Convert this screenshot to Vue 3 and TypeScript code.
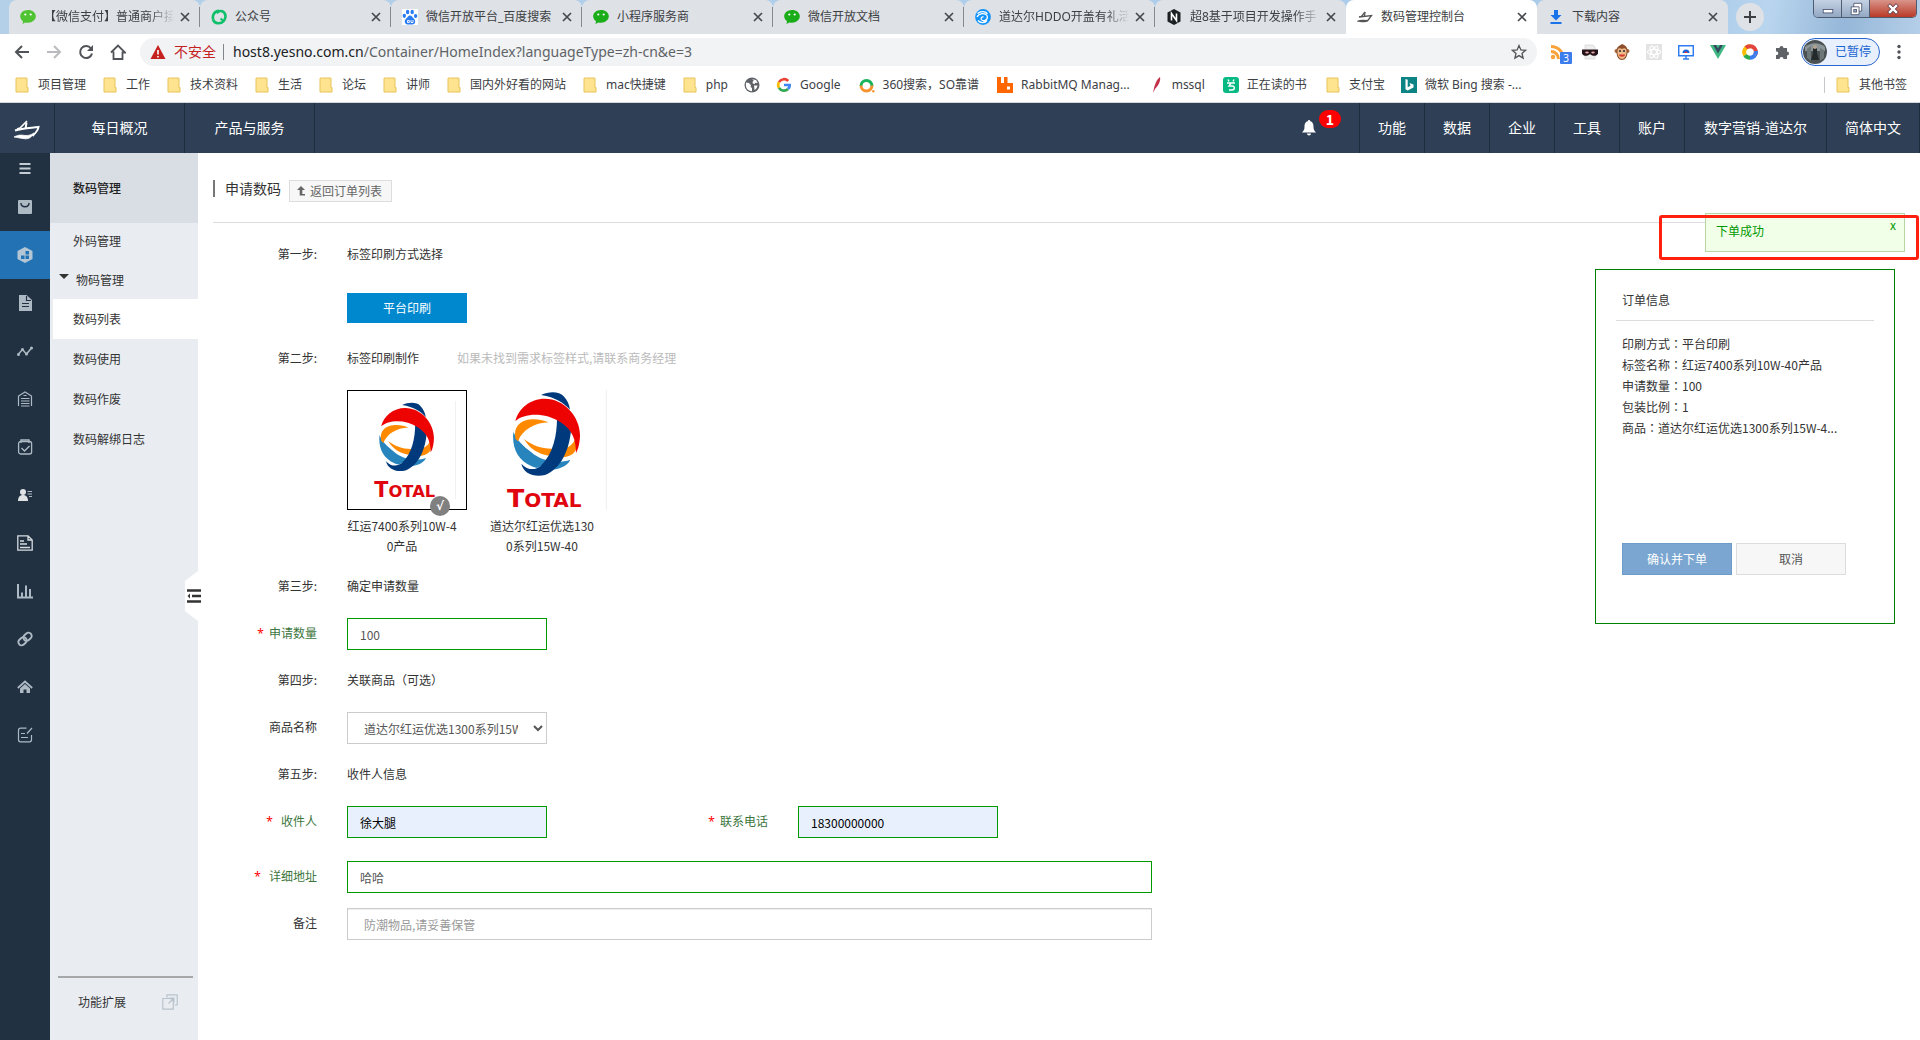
<script setup lang="ts">
import { ref } from 'vue'

interface Tab { title: string; icon: string; active?: boolean; fade?: boolean }
const tabs: Tab[] = [
  { title: '【微信支付】普通商户接', icon: 'wechat-light', fade: true },
  { title: '公众号', icon: 'mp' },
  { title: '微信开放平台_百度搜索', icon: 'baidu' },
  { title: '小程序服务商', icon: 'wechat' },
  { title: '微信开放文档', icon: 'wechat' },
  { title: '道达尔HDDO开盖有礼活', icon: 'swirl', fade: true },
  { title: '超8基于项目开发操作手', icon: 'hex', fade: true },
  { title: '数码管理控制台', icon: 'ship', active: true },
  { title: '下载内容', icon: 'download' },
]

interface Bookmark { label: string; icon: string }
const bookmarks: Bookmark[] = [
  { label: '项目管理', icon: 'folder' },
  { label: '工作', icon: 'folder' },
  { label: '技术资料', icon: 'folder' },
  { label: '生活', icon: 'folder' },
  { label: '论坛', icon: 'folder' },
  { label: '讲师', icon: 'folder' },
  { label: '国内外好看的网站', icon: 'folder' },
  { label: 'mac快捷键', icon: 'folder' },
  { label: 'php', icon: 'folder' },
  { label: '', icon: 'globe' },
  { label: 'Google', icon: 'google' },
  { label: '360搜索，SO靠谱', icon: 'so' },
  { label: 'RabbitMQ Manag...', icon: 'rabbit' },
  { label: 'mssql', icon: 'feather' },
  { label: '正在读的书', icon: 'reader' },
  { label: '支付宝', icon: 'folder' },
  { label: '微软 Bing 搜索 -...', icon: 'bing' },
]

const topMenu = ['功能', '数据', '企业', '工具', '账户', '数字营销-道达尔', '简体中文']
const rail = ['bag', 'cube', 'doc', 'trend', 'store', 'clip', 'user', 'page', 'bars', 'link', 'home', 'edit']
const subItems = ['数码列表', '数码使用', '数码作废', '数码解绑日志']
const labels = ['红运7400系列10W-40产品', '道达尔红运优选1300系列15W-40']
const summary = [
  ['印刷方式', '平台印刷'],
  ['标签名称', '红运7400系列10W-40产品'],
  ['申请数量', '100'],
  ['包装比例', '1'],
  ['商品', '道达尔红运优选1300系列15W-4...'],
]

const selected = ref(0)
const quantity = ref('100')
const product = ref('道达尔红运优选1300系列15W-40')
const receiver = ref('徐大腿')
const phone = ref('18300000000')
const address = ref('哈哈')
const remark = ref('')
</script>

<template>
  <div class="window">
    <header class="browser">
      <div class="tabstrip">
        <div v-for="t in tabs" :key="t.title" class="tab" :class="{ active: t.active, fade: t.fade }">
          <svg class="i16" viewBox="0 0 16 16">
            <g v-if="t.icon.startsWith('wechat')">
              <path :fill="t.icon === 'wechat' ? '#1aad19' : '#4fc332'" d="M8 1C3.6 1 .2 3.8.2 7.3c0 2 1.1 3.800 2.800 5L2.500 15l2.800-1.600c.9.2 1.700.3 2.700.3 4.400 0 7.800-2.800 7.800-6.400S12.400 1 8 1z" />
              <circle cx="5.300" cy="5.500" r="1.100" fill="#fff" /><circle cx="10.700" cy="5.500" r="1.100" fill="#fff" />
            </g>
            <g v-else-if="t.icon === 'mp'" fill="none" stroke="#0fbf6a" stroke-width="2.600">
              <path d="M8 1.800C3.500 2 .8 6.500 2.300 10.500M5.500 4c4-4 8.500-1.500 9 3 .1 2-.6 3.500-1.700 4.800" /><path d="M2 10.500c1.500 4.500 8 5 11 1.200" /><path d="M9.500 9.500l3.500 3" stroke-width="2" />
            </g>
            <g v-else-if="t.icon === 'baidu'">
              <rect width="16" height="16" fill="#fff" />
              <g fill="#2b7bf3"><ellipse cx="5.600" cy="3" rx="1.700" ry="2.300" /><ellipse cx="10.200" cy="3" rx="1.700" ry="2.300" /><ellipse cx="2.300" cy="6.800" rx="1.700" ry="2.100" /><ellipse cx="13.600" cy="7" rx="1.700" ry="2.100" /><path d="M8 6.500c-2 0-2.500 2-4 3.300C2 11.500 2.500 15.500 5.500 15.500h5c3 0 3.500-3.800 1.500-5.700C10.500 8.500 10 6.500 8 6.500z" /></g>
              <path d="M5.500 13.500v-2h1.800v2zM9 11v2.500h2V11" fill="none" stroke="#fff" stroke-width=".9" />
            </g>
            <g v-else-if="t.icon === 'swirl'">
              <circle cx="8" cy="8" r="7.900" fill="#1293fb" />
              <path d="M2.500 4.500c3.500-3 8.500-2 10 .5M2 8c2-4 8-4.500 10-1.500 1.500 3-1.500 6-4.500 5-2.500-1-1.500-4 1-3.500M3 11.500c2.500 3 7 2.500 9 0" fill="none" stroke="#fff" stroke-width="1.300" />
            </g>
            <g v-else-if="t.icon === 'hex'">
              <path d="M8 0l6.500 3.500v9L8 16l-6.500-3.500v-9z" fill="#1c2023" /><path d="M5.500 11.500v-7l5 7v-7" fill="none" stroke="#fff" stroke-width="1.600" />
            </g>
            <g v-else-if="t.icon === 'ship'" fill="none" stroke="#555" stroke-width="1.300">
              <path d="M8 3L4.500 7.500 2 8l12.500-1.500L10.500 12c-3 1.500-6 .5-9 0 3-1.500 6 0 9-.5" /><path d="M8 3l-.5 4" />
            </g>
            <path v-else fill="#1a73e8" d="M6 1h4v5h3.500L8 11.500 2.500 6H6zM2.500 13h11v2h-11z" />
          </svg>
          <span class="tab-title">{{ t.title }}</span>
          <button class="close" aria-label="关闭标签页"><svg viewBox="0 0 10 10"><path d="M1 1l8 8M9 1L1 9" stroke="#45494d" stroke-width="1.700" /></svg></button>
        </div>
        <button class="newtab" aria-label="新标签页"><svg viewBox="0 0 14 14"><path d="M7 1v12M1 7h12" stroke="#3c4043" stroke-width="2" /></svg></button>
        <div class="winctl">
          <button aria-label="最小化"><svg viewBox="0 0 16 16"><rect x="2.500" y="8.500" width="11" height="4" fill="#fff" stroke="#4c5670" /></svg></button>
          <button aria-label="还原"><svg viewBox="0 0 16 16"><path d="M5.500 1.500h9v9h-9z" fill="#fff" stroke="#4c5670" /><path d="M2.500 5.500h9v9h-9z" fill="#fff" stroke="#4c5670" /><rect x="5.500" y="8.500" width="3" height="3" fill="#9fb1cf" stroke="#4c5670" /></svg></button>
          <button class="quit" aria-label="关闭"><svg viewBox="0 0 16 16"><path d="M3 3l10 10M13 3L3 13" stroke="#5b3540" stroke-width="4.500" /><path d="M3.500 3.500l9 9M12.500 3.500l-9 9" stroke="#fff" stroke-width="2.800" /></svg></button>
        </div>
      </div>

      <div class="toolbar">
        <button aria-label="后退"><svg viewBox="0 0 16 16"><path d="M15 8H2M8 2L2 8l6 6" fill="none" stroke="#505458" stroke-width="2" /></svg></button>
        <button aria-label="前进"><svg viewBox="0 0 16 16"><path d="M1 8h13M8 2l6 6-6 6" fill="none" stroke="#b9bbbe" stroke-width="2" /></svg></button>
        <button aria-label="刷新"><svg viewBox="0 0 16 16"><path d="M13 4.500A6 6 0 1 0 14 9.500" fill="none" stroke="#505458" stroke-width="2" /><path d="M15 1v6H9z" fill="#505458" /></svg></button>
        <button aria-label="主页"><svg viewBox="0 0 16 16"><path d="M3.500 7.500V15h9V7.500M1 8.500l7-7 7 7h-2.500" fill="none" stroke="#505458" stroke-width="1.800" /></svg></button>
        <div class="omnibox">
          <svg class="i16" viewBox="0 0 16 16"><path d="M8 1l7.500 14H.5z" fill="#c5221f" /><path d="M8 6v4.500M8 12v1.500" stroke="#fff" stroke-width="1.600" /></svg>
          <span class="unsafe">不安全</span>
          <span class="url" role="textbox" aria-label="地址栏" contenteditable="true" spellcheck="false"><b>host8.yesno.com.cn</b>/Container/HomeIndex?languageType=zh-cn&amp;e=3</span>
          <button aria-label="收藏"><svg viewBox="0 0 16 16"><path d="M8 1.500l1.900 4.400 4.700.4-3.600 3.100 1.100 4.700L8 11.600l-4.100 2.500L5 9.400 1.400 6.300l4.700-.4z" fill="none" stroke="#505458" stroke-width="1.300" /></svg></button>
        </div>
        <div class="exts">
          <button class="rss" aria-label="订阅"><svg viewBox="0 0 16 16"><g fill="none" stroke="#f9a13a" stroke-width="3"><path d="M1 2.500C8 2.500 13.500 8 13.500 15" /><path d="M1 7.500c4 0 7.500 3 7.500 7.500" /></g><circle cx="3" cy="13" r="2.200" fill="#f9a13a" /></svg><span>3</span></button>
          <button aria-label="隐身面具"><svg viewBox="0 0 16 16"><path d="M3 1h8l2 2v12H3z" fill="#eee" stroke="#ccc" stroke-width=".6" /><path d="M0 5.500h16v4c-1 3-6 3-8 .5-2 2.500-7 2.500-8-.5z" fill="#241318" /><ellipse cx="5" cy="8.500" rx="1.800" ry="1.100" fill="#e8a7a7" /><ellipse cx="11" cy="8.500" rx="1.800" ry="1.100" fill="#e8a7a7" /></svg></button>
          <button aria-label="油猴"><svg viewBox="0 0 16 16"><circle cx="2.500" cy="7" r="2" fill="#a5653c" /><circle cx="13.500" cy="7" r="2" fill="#a5653c" /><path d="M8 0c3 1 6 3 5.500 8 0 5-2.500 8-5.500 8s-5.500-3-5.500-8C2 3 5 2 8 0z" fill="#8d4f2b" /><path d="M8 5c3-2 5 0 4.500 3 0 4-2 7-4.500 7s-4.500-3-4.500-7C3 5 5 3 8 5z" fill="#eeb98b" /><circle cx="6" cy="7" r="1.100" fill="#333" /><circle cx="10" cy="7" r="1.100" fill="#333" /><path d="M5 10.500h6c0 3-6 3-6 0z" fill="#d3382b" /></svg></button>
          <button aria-label="React"><svg viewBox="0 0 16 16"><rect width="16" height="16" fill="#e3e3e3" /><g fill="none" stroke="#fff" stroke-width="1.100"><ellipse cx="8" cy="8" rx="6.500" ry="2.500" /><ellipse cx="8" cy="8" rx="6.500" ry="2.500" transform="rotate(60 8 8)" /><ellipse cx="8" cy="8" rx="6.500" ry="2.500" transform="rotate(120 8 8)" /></g></svg></button>
          <button aria-label="远程桌面"><svg viewBox="0 0 16 16"><path d="M.7 1.700h14.600v10H.7zM8 11.700V15M5 15h6" fill="none" stroke="#2f7cf0" stroke-width="1.500" /><path d="M4.500 9a3.500 3.500 0 0 1 7 0z" fill="#1565e0" /><path d="M6.500 9a1.500 1.500 0 0 1 3 0z" fill="#e33" /></svg></button>
          <button aria-label="Vue"><svg viewBox="0 0 16 16"><path d="M0 1h16L8 15z" fill="#41b883" /><path d="M3.200 1H6l2 3.500L10 1h2.800L8 9.500z" fill="#34495e" /></svg></button>
          <button aria-label="色环"><svg viewBox="0 0 16 16"><g fill="none" stroke-width="4"><path d="M8 2.200A5.800 5.800 0 0 1 13 11" stroke="#e2453c" /><path d="M13 11a5.800 5.800 0 0 1-5 2.800" stroke="#3b7ded" /><path d="M8 13.800A5.800 5.800 0 0 1 3 11" stroke="#2da94f" /><path d="M3 11A5.800 5.800 0 0 1 8 2.200" stroke="#fbbc05" /><path d="M4 3.800A5.800 5.800 0 0 1 8 2.200" stroke="#e2453c" /><path d="M13.800 7a5.800 5.800 0 0 1-.8 4" stroke="#3b7ded" /></g></svg></button>
          <button aria-label="扩展程序"><svg viewBox="0 0 16 16"><path d="M2 4h3.500a2 2 0 1 1 4 0H13v3.500a2 2 0 1 1 0 4V15H9.500a2 2 0 1 0-4 0H2v-4a1.800 1.800 0 1 0 0-3.500z" fill="#5f6368" /></svg></button>
        </div>
        <button class="profile">
          <svg viewBox="0 0 24 24"><circle cx="12" cy="12" r="12" fill="#4b5153" /><path d="M2 7c6-5 14-5 20 0v4H2z" fill="#8b9496" /><path d="M4 9l4-3v15l-4-3zM17 8l4 2v8l-4 3z" fill="#6d7778" /><path d="M10 8h4v5l2 7H8l2-7z" fill="#24292c" /><circle cx="12" cy="7" r="2" fill="#b4a393" /></svg>
          <span>已暂停</span>
        </button>
        <button class="dots" aria-label="菜单"><svg viewBox="0 0 16 16"><g fill="#505458"><circle cx="8" cy="2.500" r="1.700" /><circle cx="8" cy="8" r="1.700" /><circle cx="8" cy="13.500" r="1.700" /></g></svg></button>
      </div>

      <nav class="bookmarks" aria-label="书签栏">
        <a v-for="(b, n) in bookmarks" :key="n" href="#" :class="{ site: b.icon !== 'folder' && b.label }">
          <svg class="i16" viewBox="0 0 16 16">
            <path v-if="b.icon === 'folder'" d="M2 1h11v9.500h1V15H2z" fill="#fee48f" stroke="#e8c35a" />
            <g v-else-if="b.icon === 'globe'"><circle cx="8" cy="8" r="7.500" fill="#5f6368" /><path d="M2 5.500l3 .5 2 2.200-.5 1.800 1.500 1v3.200C4 14 1.800 11 1.900 8zM8 2.200l4 .8 1.800 3-2.300-.3-1 1.300-2-.7.3-1.800 1-1zM10 8.500h3.500c-.2 2-1.500 3.800-3 4.500z" fill="#fff" /></g>
            <g v-else-if="b.icon === 'google'" fill="none" stroke-width="2.700"><path d="M12.200 4A5.700 5.700 0 0 0 3 5.200" stroke="#ea4335" /><path d="M3 5.200a5.700 5.700 0 0 0 0 5.600" stroke="#fbbc05" /><path d="M3 10.800a5.700 5.700 0 0 0 9 1.200" stroke="#34a853" /><path d="M12 12c1.200-1.200 1.800-2.500 1.700-4H8" stroke="#4285f4" /></g>
            <g v-else-if="b.icon === 'so'" fill="none" stroke-width="3"><path d="M2 9a5.500 5.500 0 1 1 11 0" stroke="#19b35c" /><path d="M2 8.500a5.500 5.500 0 0 0 11 0" stroke="#f7932f" /><circle cx="14.300" cy="14.200" r="1.200" fill="#f7932f" stroke="none" /></g>
            <g v-else-if="b.icon === 'rabbit'"><path d="M0 0h4v6h3V0h3.500v6H16v10H0z" fill="#f60" /><rect x="10" y="9.500" width="3" height="3" fill="#fff" /></g>
            <path v-else-if="b.icon === 'feather'" d="M12 0c1 4-2 9-5 12l-2 4 1-5c1-4 3-9 6-11z" fill="#c3304a" />
            <g v-else-if="b.icon === 'reader'"><rect width="16" height="16" rx="3" fill="#07b983" /><path d="M5 2.500l1 2M11 2.500l-1 2M4 6h8M8 6L6 9h3.500c2.500 0 2.500 4-.5 4H6" fill="none" stroke="#fff" stroke-width="1.400" /></g>
            <g v-else><rect width="16" height="16" fill="#0c8484" /><path d="M4.500 2l2.200.8v7.400l2.800-1.500-1-2.700 4 1.500v2.900L6.700 13.500l-2.200-1.300z" fill="#fff" /></g>
          </svg>
          <span v-if="b.label">{{ b.label }}</span>
        </a>
        <a class="other" href="#">
          <svg class="i16" viewBox="0 0 16 16"><path d="M2 1h11v9.500h1V15H2z" fill="#fee48f" stroke="#e8c35a" /></svg>
          <span>其他书签</span>
        </a>
      </nav>
    </header>

    <div class="topbar">
      <a class="logo" href="#" aria-label="首页"><svg viewBox="0 0 28 20" fill="none" stroke="#fff"><path d="M14 1L7 8 4 9" stroke-width="1.600" /><path d="M13.500 2.500L12.500 9" stroke-width="2" /><path d="M2 10.500C10 8 18 8 25.500 7c-.5 4-4 7-6 9" stroke-width="2" /><path d="M1 17c5-2.500 8-2 11-1.500 3 .3 6-.5 9-2.500-2 4-5 6-9 5.800-4-.3-7-1.500-11-1.800z" fill="#fff" stroke-width=".8" /></svg></a>
      <a class="wide" href="#">每日概况</a>
      <a class="wide" href="#">产品与服务</a>
      <div class="grow"></div>
      <button class="bell" aria-label="消息"><svg viewBox="0 0 14 16"><path d="M7 0c.8 0 1.200.6 1.200 1.300C11 2 11.500 4.500 11.500 7c0 2.500.8 3.500 2.500 5.500H0C1.700 10.500 2.500 9.500 2.500 7c0-2.500.5-5 3.300-5.700C5.800.6 6.200 0 7 0zM5 13.500h4c0 2.500-4 2.500-4 0z" fill="#fff" /></svg><span>1</span></button>
      <a v-for="m in topMenu" :key="m" href="#" :class="{ account: m.length > 4 }">{{ m }}</a>
    </div>

    <div class="body">
      <nav class="rail" aria-label="主导航">
        <button class="burger" aria-label="展开"><svg viewBox="0 0 16 16"><path d="M2.500 4h11M2.500 8.500h11M2.500 13h11" stroke="#c3ccd3" stroke-width="1.800" /></svg></button>
        <a v-for="r in rail" :key="r" href="#" :class="{ on: r === 'cube' }" :aria-label="r">
          <svg viewBox="0 0 16 16" fill="none" stroke="#adbac4">
            <g v-if="r === 'bag'"><rect x="1" y="1" width="14" height="14" rx="1" fill="#adbac4" stroke="none" /><path d="M4 4c0 5 8 5 8 0" stroke="#223142" stroke-width="1.400" /></g>
            <g v-else-if="r === 'cube'" stroke="none"><path d="M8 0l7.500 4v8L8 16 .5 12V4z" fill="#b3c6d6" /><path d="M8.500 4h3.500v3.500H8.500zM8.500 8.500H12V12H8.500zM4 8.500h3.500V12H4z" fill="#2272b4" /></g>
            <g v-else-if="r === 'doc'" stroke="none"><path d="M2 0h7.500L15 5v11H2z" fill="#adbac4" /><path d="M9.500 1v4.500H14M5 8.500h7M5 11.500h7" fill="none" stroke="#223142" stroke-width="1.200" /></g>
            <g v-else-if="r === 'trend'"><path d="M1 11.500l4.500-5 4 4.500 5-6" stroke-width="1.500" /><g fill="#adbac4" stroke="none"><circle cx="1.500" cy="11.500" r="1.500" /><circle cx="5.500" cy="6.500" r="1.400" /><circle cx="9.500" cy="11" r="1.500" /><circle cx="14.500" cy="5" r="1.500" /></g></g>
            <path v-else-if="r === 'store'" d="M1.500 15V5L8 1l6.500 4v10M4 7.500h8.500M4 10h8.500M4 12.500h8.500M4 15h8.500M6.500 4.500h3" stroke-width="1.200" />
            <g v-else-if="r === 'clip'"><rect x="1.600" y="2.500" width="13" height="12.500" rx="2" stroke-width="1.300" /><path d="M4 4V1h8v3M4.500 9l3 3 5-5" stroke-width="1.400" /></g>
            <g v-else-if="r === 'user'"><g fill="#dfe3e6" stroke="none"><circle cx="6" cy="5" r="3" /><path d="M1 14c0-4 2-6 5-6s5 2 5 6z" /></g><path d="M10.500 4.500H15M10.500 7H15M12 9.500h3" stroke-width="1.100" /></g>
            <path v-else-if="r === 'page'" d="M.8.8H11l4.200 4.200v10.200H.8zM11 1v4h4M3 6h4M3 9h7M3 12.500h10" stroke="#d5dbdf" stroke-width="1.300" />
            <path v-else-if="r === 'bars'" d="M1 1v13.500h15M5 14V9.500M9 14V2.500M13 14V6" stroke-width="2" />
            <g v-else-if="r === 'link'" stroke-width="1.900"><rect x="6" y="2.500" width="9" height="6.500" rx="3.200" transform="rotate(-42 10.500 5.700)" /><rect x="1" y="7" width="9" height="6.500" rx="3.200" transform="rotate(-42 5.500 10.200)" /></g>
            <g v-else-if="r === 'home'"><path d="M.8 9L8 2.500 15.200 9" stroke-width="1.700" /><path d="M3 9.500l5-4.500 5 4.500V14H9.500v-3.500h-3V14H3z" fill="#adbac4" stroke="none" /></g>
            <path v-else d="M9.500 1.200H3.500a2 2 0 0 0-2 2v9.600a2 2 0 0 0 2 2h9a2 2 0 0 0 2-2V8M15 1l-5 5.500M4 6.500h4M4 10.500h7" stroke-width="1.200" />
          </svg>
        </a>
      </nav>

      <aside class="side">
        <h2>数码管理</h2>
        <a class="parent" href="#">外码管理</a>
        <a class="parent open" href="#"><i></i>物码管理</a>
        <a v-for="(s, n) in subItems" :key="s" class="child" :class="{ on: n === 0 }" href="#">{{ s }}</a>
        <div class="extend"><a href="#">功能扩展</a>
          <svg class="i16" viewBox="0 0 16 16" fill="none" stroke="#b8c3cb" stroke-width="1.200"><path d="M5 3.500V.8h10.200V11h-2.500M.8 4.500h10.500v10.700H.8zM6.500 9.500l5-5" /><path d="M7 3.500h5.500V9z" fill="#b8c3cb" stroke="none" /></svg>
        </div>
        <button class="fold" aria-label="收起菜单"><svg viewBox="0 0 14 14"><path d="M0 1.500h14M5 7h9M0 12.500h14" stroke="#333" stroke-width="2.600" /><path d="M3 4.500v5L.5 7z" fill="#333" /></svg></button>
      </aside>

      <main>
        <div class="title">
          <h1>申请数码</h1>
          <button class="back"><svg viewBox="0 0 8 10"><path d="M4 0l4 4H5.300v4H8v1.600H2.700V4H0z" fill="#666" /></svg>返回订单列表</button>
        </div>
        <div class="content">
          <form @submit.prevent>
            <div class="row"><span class="lab">第一步:</span><span>标签印刷方式选择</span></div>
            <div class="row mode"><button type="button">平台印刷</button></div>
            <div class="row"><span class="lab">第二步:</span><span class="make">标签印刷制作</span><span class="hint">如果未找到需求标签样式,请联系商务经理</span></div>
            <div class="row cards">
              <button v-for="(l, n) in labels" :key="l" type="button" class="card" :class="{ picked: n === selected }" @click="selected = n">
                <span class="thumb">
                  <svg viewBox="741 60 360 360">
                    <path d="M903 75c25-12 55-11 68 4 11 11 17 26 19 40-18-20-43-37-87-44z" fill="#003a7c" />
                    <path d="M820 185c-4 42 8 76 42 97 42 26 112 23 129-13-38 14-87 4-117-22-27-22-42-34-54-62z" fill="#2884bd" />
                    <path d="M852 207c25 20 56 31 92 29l-18 21c-32-5-58-22-74-50zM968 237c20-4 32-16 38-31 10 26 0 45-18 51-10 4-22 6-32 5z" fill="#ff8a00" />
                    <path d="M826 206c-6-34 12-56 50-58 20-1 38 4 50 9-44 2-78 22-92 57z" fill="#ff8a00" />
                    <path d="M845 281c20 17 42 18 58 6l6 2c-18 26-52 17-62-4z" fill="#fff" />
                    <path d="M951 145l42 35c-4 54-28 116-78 135-34 8-65-6-71-34 20 22 44 19 58 7 38-36 49-93 49-143z" fill="#003a7c" />
                    <path d="M826 153c10-38 44-67 88-67 60 0 105 55 106 108 0 20-4 42-12 55 0-39-10-68-46-92-46-31-108-29-136-4z" fill="#ee0303" />
                    <text x="801" y="411" fill="#e0060f"><tspan font-size="76">T</tspan><tspan font-size="60">OTAL</tspan></text>
                    <path d="M1099 60v360" stroke="#eee" stroke-width="3" />
                  </svg>
                </span>
                <span v-if="n === selected" class="tick">√</span>
                <span class="cap">{{ l }}</span>
              </button>
            </div>
            <div class="row"><span class="lab">第三步:</span><span>确定申请数量</span></div>
            <div class="row field ok"><label class="lab" for="qty"><em>*</em>申请数量</label><input id="qty" v-model="quantity" type="text" /></div>
            <div class="row"><span class="lab">第四步:</span><span>关联商品（可选）</span></div>
            <div class="row field"><label class="lab" for="prod">商品名称</label><select id="prod" v-model="product"><option>道达尔红运优选1300系列15W-40</option></select></div>
            <div class="row"><span class="lab">第五步:</span><span>收件人信息</span></div>
            <div class="row field ok">
              <label class="lab wide-star" for="who"><em>*</em>收件人</label><input id="who" v-model="receiver" class="filled" type="text" />
              <label class="lab second" for="tel"><em>*</em>联系电话</label><input id="tel" v-model="phone" class="filled" type="text" />
            </div>
            <div class="row field ok addr"><label class="lab wide-star" for="addr"><em>*</em>详细地址</label><input id="addr" v-model="address" class="long" type="text" /></div>
            <div class="row field"><label class="lab" for="note">备注</label><input id="note" v-model="remark" class="long note" type="text" placeholder="防潮物品,请妥善保管" /></div>
          </form>

          <section class="order">
            <h3>订单信息</h3>
            <dl>
              <div v-for="s in summary" :key="s[0]"><dt>{{ s[0] }}<span class="colon">：</span></dt><dd>{{ s[1] }}</dd></div>
            </dl>
            <div class="acts"><button class="primary">确认并下单</button><button>取消</button></div>
          </section>
        </div>
        <div class="toast" role="status"><span>下单成功</span><button aria-label="关闭提示">x</button></div>
        <div class="mark"></div>
      </main>
    </div>
  </div>
</template>

<style>
body { margin: 0; background: #fff; }
</style>

<style scoped>
* { box-sizing: border-box; }
.window { display: flex; flex-direction: column; min-height: 100vh; font: 12px/20px "Noto Sans CJK SC", sans-serif; color: #333; }
button, input, select { font: inherit; color: inherit; margin: 0; }
button { border: 0; padding: 0; background: none; cursor: pointer; }
a { color: inherit; text-decoration: none; }
svg { display: block; flex: none; }
.i16 { width: 16px; height: 16px; }
h1, h2, h3, dl, dd { margin: 0; font-weight: normal; }

.browser { background: #fff; font-family: "Noto Sans", "Noto Sans CJK SC", sans-serif; color: #3c4043; border-bottom: 1px solid #d4d6d9; }
.tabstrip { display: flex; height: 34px; padding-left: 9px; background: linear-gradient(100deg, #b4d0e8 0%, #a9cbeb 88%, #b9d5ee 92%, #96b7d9 96%, #b5cfe8 100%); }
.tab { position: relative; display: flex; align-items: center; width: 191px; padding: 0 10px 0 11px; background: #dee1e6; border-radius: 8px 8px 0 0; }
.tab::after { content: ""; position: absolute; right: 0; top: 7px; width: 1px; height: 20px; background: #868a90; }
.tab.active { background: #fff; }
.tab.active::after, .tab:nth-child(7)::after, .tab:nth-child(9)::after { display: none; }
.tab-title { flex: 1; margin-left: 8px; white-space: nowrap; }
.fade .tab-title { min-width: 0; overflow: hidden; mask-image: linear-gradient(to right, #000 calc(100% - 24px), transparent); }
.close { width: 10px; height: 10px; margin-left: 6px; }
.newtab { display: grid; place-items: center; width: 28px; height: 28px; margin: 3px 0 0 8px; border-radius: 14px; background: #dee1e6; }
.newtab svg { width: 14px; height: 14px; }
.winctl { display: flex; width: 104px; height: 18px; margin: 0 3px 0 auto; border: 1px solid #4f5b6e; border-top: 0; border-radius: 0 0 5px 5px; overflow: hidden; }
.winctl button { display: grid; place-items: center; width: 28px; background: linear-gradient(#c5d2e3, #93a8c4); border-right: 1px solid #4f5b6e; }
.winctl .quit { flex: 1; border: 0; background: linear-gradient(#d9948a, #b93a26); }
.winctl svg { width: 14px; height: 14px; }

.toolbar { display: flex; align-items: center; height: 36px; padding: 0 13px 0 14px; }
.toolbar > button svg, .omnibox button svg, .exts svg { width: 16px; height: 16px; }
.toolbar > button { margin-right: 16px; }
.omnibox { display: flex; align-items: center; flex: 1; height: 28px; padding: 0 10px; margin: 0 12px 0 -2px; border-radius: 14px; background: #f1f3f4; font-size: 14px; }
.unsafe { margin-left: 8px; padding-right: 7px; border-right: 1px solid #80868b; color: #c5221f; line-height: 16px; }
.url { flex: 1; margin-left: 9px; color: #5f6368; white-space: nowrap; outline: 0; }
.url b { font-weight: normal; color: #202124; }
.exts { display: flex; gap: 16px; margin: 0 11px 0 1px; }
.exts button { position: relative; }
.rss span { position: absolute; left: 10px; top: 8px; width: 12px; height: 12px; background: #3b7ded; color: #fff; font-size: 10px; line-height: 12px; border-radius: 1px; }
.toolbar .profile { display: flex; align-items: center; width: 79px; height: 28px; margin-right: 11px; padding-left: 1px; gap: 8px; border: 1px solid #2967cf; border-radius: 14px; background: #e8f0fe; color: #1a66d2; }
.toolbar .profile svg { width: 24px; height: 24px; }
.toolbar .dots { margin: 0; }

.bookmarks { display: flex; align-items: center; gap: 16px; height: 32px; padding: 0 13px 2px 14px; white-space: nowrap; }
.bookmarks a { display: flex; align-items: center; gap: 8px; }
.bookmarks .site { margin-right: 2px; }
.bookmarks .other { margin-left: auto; padding-left: 10px; border-left: 1px solid #c5c7ca; line-height: 16px; }

.topbar { display: flex; height: 50px; background: #2f4056; color: #fff; font-size: 14px; line-height: 48px; }
.topbar a { padding: 0 18px; border-right: 1px solid #1e2d3c; }
.topbar .logo { display: grid; place-items: center; width: 55px; padding: 4px 0 0; }
.logo svg { width: 28px; height: 20px; }
.topbar .wide { width: 130px; padding: 0; text-align: center; }
.topbar .account { width: 142px; padding: 0; text-align: center; }
.grow { flex: 1; }
.bell { position: relative; width: 58px; border-right: 1px solid #1e2d3c; }
.bell svg { width: 14px; height: 16px; }
.bell span { position: absolute; left: 17px; top: 7px; width: 22px; height: 18px; border-radius: 9px; background: #f00; font-weight: bold; line-height: 18px; }

.body { display: flex; flex: 1; }
.rail { width: 50px; background: #223142; }
.rail a, .rail button { display: grid; place-items: center; width: 50px; height: 48px; }
.rail .burger { height: 30px; }
.rail .on { background: #2272b4; }
.rail svg { width: 16px; height: 16px; }

.side { position: relative; display: flex; flex-direction: column; width: 148px; background: #e9edf2; }
.side h2 { height: 70px; padding-left: 23px; background: #d9dde4; font-size: 12px; line-height: 70px; color: #222; font-weight: 500; }
.parent { height: 38px; padding-left: 23px; line-height: 36px; }
.open { display: flex; padding-left: 9px; line-height: 38px; }
.open i { width: 0; height: 0; margin: 13px 7px 0 0; border: 5px solid transparent; border-top-color: #333; border-bottom: 0; }
.child { height: 40px; margin-left: 3px; padding-left: 20px; line-height: 40px; }
.child.on { background: #fff; }
.extend { display: flex; align-items: center; justify-content: space-between; height: 64px; margin: auto 5px 0 8px; padding: 0 15px 14px 20px; border-top: 2px solid #a5a7a9; }
.fold { position: absolute; right: -3px; top: 418px; display: grid; align-content: center; justify-content: end; width: 16px; height: 50px; background: #fff; clip-path: polygon(0 20%, 80% 0, 100% 0, 100% 100%, 80% 100%, 0 80%); }
.fold svg { width: 14px; height: 14px; }

main { position: relative; flex: 1; min-width: 0; padding-left: 15px; }
.title { display: flex; height: 70px; margin-right: 15px; padding-top: 27px; border-bottom: 1px solid #ddd; }
h1 { height: 17px; padding-left: 10px; border-left: 2px solid #777; font-size: 14px; line-height: 17px; }
.back { display: flex; align-items: center; height: 22px; margin-left: 8px; padding: 0 9px 0 7px; gap: 5px; border: 1px solid #ddd; background: #f7f7f7; color: #666; }
.back svg { width: 8px; height: 10px; }
.content { display: flex; align-items: flex-start; justify-content: space-between; }
form { display: flex; flex-direction: column; gap: 21px; padding: 22px 0 40px; }
.row { display: flex; min-height: 20px; }
.row > span { line-height: 18px; }
.lab { width: 104px; margin-right: 30px; text-align: right; flex: none; }
label.lab { padding-bottom: 2px; }
.mode { padding: 7px 0 5px 134px; }
.mode button { width: 120px; height: 30px; background: #0088cf; color: #fff; }
.make { width: 110px; }
.hint { color: #bbb; }
.cards { gap: 30px; padding-left: 134px; }
.card { position: relative; width: 110px; }
.thumb { display: block; width: 120px; height: 120px; margin-bottom: 6px; }
.picked .thumb { padding: 10px; border: 1px solid #000; }
.thumb text { font-family: "DejaVu Sans", sans-serif; font-weight: bold; }
.tick { position: absolute; left: 83px; top: 106px; width: 20px; height: 20px; border-radius: 10px; background: #808080; color: #fff; font-family: "DejaVu Sans", sans-serif; font-weight: bold; line-height: 20px; }
.cap { display: block; word-break: break-all; }
.field { align-items: center; }
.field.ok .lab { color: #3c763d; }
em { margin-right: 5px; color: #f00; font-family: "Noto Sans", sans-serif; font-style: normal; }
.wide-star em { margin-right: 8px; }
input, select { width: 200px; height: 32px; padding: 0 12px; border: 1px solid #ccc; border-radius: 0; background: #fff; color: #555; outline: 0; }
.ok input { border-color: #090; }
.ok input.filled { background: #e8f0fe; color: #000; }
.second { width: 221px; }
.long { width: 805px; }
.note { padding-left: 16px; box-shadow: inset 0 1px 1px #eee; }
.note::placeholder { color: #999; opacity: 1; }
.addr { margin: 2px 0 -6px; }

.order { width: 300px; height: 355px; flex: none; margin: 46px 25px 0 0; padding: 20px 20px 0; border: 1px solid #008000; }
h3 { width: 258px; height: 31px; padding-left: 6px; border-bottom: 1px solid #ddd; font-size: 12px; line-height: 20px; }
dl { height: 222px; padding: 12px 6px 0; }
dl div { display: flex; height: 21px; line-height: 21px; white-space: nowrap; }
dt { flex: none; }
.colon { font-family: "Noto Sans CJK TC", sans-serif; }
.acts { display: flex; gap: 4px; padding-left: 6px; }
.acts button { width: 110px; height: 32px; border: 1px solid #ddd; background: #f7f7f7; color: #555; }
.acts .primary { border-color: #6d9cc8; background: #7aa6d1; color: #fff; }

.toast { position: absolute; right: 15px; top: 60px; display: flex; justify-content: space-between; width: 200px; height: 39px; padding: 7px 8px 0 10px; border: 1px solid #b7d6a4; background: #f2ffe8; color: #090; }
.toast button { height: 8px; line-height: 8px; }
.mark { position: absolute; right: 1px; top: 62px; width: 260px; height: 45px; border: 3px solid #ff2010; border-radius: 3px; pointer-events: none; }
</style>
